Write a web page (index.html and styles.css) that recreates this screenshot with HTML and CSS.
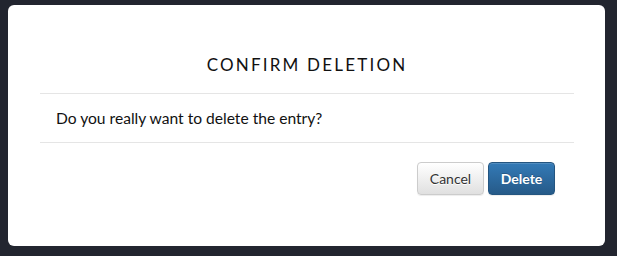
FILE: index.html
```html
<!DOCTYPE html>
<html>
<head>
<meta charset="utf-8">
<link rel="stylesheet" href="styles.css">
</head>
<body>
<div class="modal">
  <div class="modal-header">
    <h4 class="modal-title">Confirm Deletion</h4>
  </div>
  <div class="modal-body">Do you really want to delete the entry?</div>
  <div class="modal-footer">
    <button class="btn btn-default">Cancel</button>
    <button class="btn btn-primary">Delete</button>
  </div>
</div>
</body>
</html>
```
FILE: styles.css
```css
html, body {
  margin: 0;
  height: 100%;
}
body {
  background: #22252f;
  padding: 5px 12px 10px 8px;
  box-sizing: border-box;
  font-family: Lato, "Open Sans", sans-serif;
}
.modal {
  background: #fff;
  border-radius: 6px;
  height: 241px;
  padding: 0 31px 0 32px;
  box-sizing: border-box;
  display: flex;
  flex-direction: column;
}
.modal-header {
  height: 89px;
  border-bottom: 1px solid #e5e5e5;
  display: flex;
  align-items: flex-end;
  justify-content: center;
  padding-bottom: 20px;
  box-sizing: border-box;
}
.modal-title {
  margin: 0;
  font-size: 17px;
  font-weight: 400;
  letter-spacing: 2.2px;
  text-transform: uppercase;
  color: #111;
  line-height: 1;
}
.modal-body {
  height: 49px;
  border-bottom: 1px solid #e5e5e5;
  box-sizing: border-box;
  padding-left: 16px;
  display: flex;
  align-items: center;
  font-size: 15.6px;
  color: #111;
  padding-bottom: 1px;
}
.modal-footer {
  display: flex;
  justify-content: flex-end;
  gap: 4px;
  padding-top: 19px;
  padding-right: 19px;
}
.btn {
  font-family: inherit;
  font-size: 14px;
  height: 33px;
  width: 67px;
  border-radius: 4px;
  padding: 0;
  cursor: pointer;
}
.btn-default {
  color: #333;
  background: linear-gradient(to bottom, #fff 0%, #e0e0e0 100%);
  border: 1px solid #ccc;
  text-shadow: 0 1px 0 #fff;
  box-shadow: inset 0 1px 0 rgba(255,255,255,.15), 0 1px 1px rgba(0,0,0,.075);
}
.btn-primary {
  color: #fff;
  font-weight: 700;
  background: linear-gradient(to bottom, #337ab7 0%, #265a88 100%);
  border: 1px solid #245580;
  text-shadow: 0 -1px 0 rgba(0,0,0,.2);
  box-shadow: inset 0 1px 0 rgba(255,255,255,.15), 0 1px 1px rgba(0,0,0,.075);
}
```
